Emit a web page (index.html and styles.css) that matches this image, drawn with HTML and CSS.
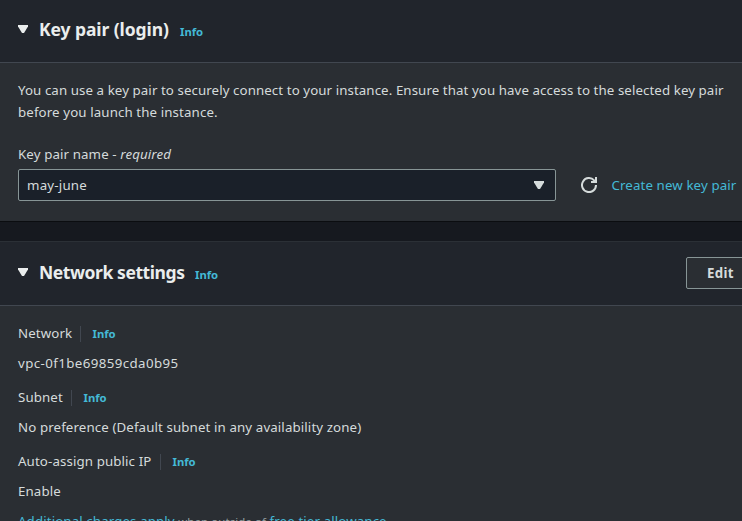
FILE: index.html
```
<!DOCTYPE html>
<html lang="en">
<head>
<meta charset="utf-8">
<title>Launch an instance</title>
<link rel="stylesheet" href="styles.css">
</head>
<body>
<section class="panel key-pair">
  <header class="panel-header">
    <svg class="caret" width="10" height="8" viewBox="0 0 10 8"><path d="M0 0h10v1.5L6 8H4L0 1.5z"/></svg>
    <h2 class="title">Key pair (login)</h2>
    <a class="info">Info</a>
  </header>
  <div class="panel-body">
    <p class="description"><span class="line-one">You can use a key pair to securely connect to your instance. Ensure that you have access to the selected key pair</span><br>before you launch the instance.</p>
    <label class="field-label">Key pair name - <i>required</i></label>
    <div class="field-row">
      <div class="select">
        <span>may-june</span>
        <svg class="caret" width="10" height="8" viewBox="0 0 10 8"><path d="M0 0h10v1.5L6 8H4L0 1.5z"/></svg>
      </div>
      <svg class="refresh" width="16" height="16" viewBox="0 0 16 16"><path d="M15 8A7 7 0 1 1 13.2 3.4L14.6 5M15 0v5H10"/></svg>
      <a class="create">Create new key pair</a>
    </div>
  </div>
</section>
<section class="panel network">
  <header class="panel-header">
    <svg class="caret" width="10" height="8" viewBox="0 0 10 8"><path d="M0 0h10v1.5L6 8H4L0 1.5z"/></svg>
    <h2 class="title title-network">Network settings</h2>
    <a class="info">Info</a>
    <button class="edit">Edit</button>
  </header>
  <div class="settings">
    <div class="setting">
      <div class="name"><span class="name-network">Network</span><a class="info">Info</a></div>
      <div class="value vpc">vpc-0f1be69859cda0b95</div>
    </div>
    <div class="setting">
      <div class="name"><span class="name-subnet">Subnet</span><a class="info">Info</a></div>
      <div class="value">No preference (Default subnet in any availability zone)</div>
    </div>
    <div class="setting">
      <div class="name"><span class="name-ip">Auto-assign public IP</span><a class="info">Info</a></div>
      <div class="value">Enable</div>
      <div class="value charges"><a>Additional charges apply</a> <small>when outside of</small> <a>free tier allowance</a></div>
    </div>
  </div>
</section>
</body>
</html>
```
FILE: styles.css
```
* { box-sizing: border-box; }
body {
  margin: 0;
  height: 521px;
  overflow: hidden;
  background: #16191f;
  color: #d5dbdb;
  font: 13.3px/22px "Noto Sans", "Open Sans", sans-serif;
  letter-spacing: 0.11px;
  white-space: nowrap;
}
a { color: #44b9d6; }
svg { flex: none; }
.panel { background: #2a2e33; }
.key-pair { height: 222px; border-bottom: 1px solid #0b0d10; }
.network { height: 280px; overflow: hidden; margin-top: 19px; border-top: 1px solid #2b3036; }
.panel-header {
  display: flex;
  align-items: baseline;
  height: 63px;
  padding: 17px 0 0 18px;
  background: #21252c;
  border-bottom: 1px solid #414750;
}
.network .panel-header { height: 64px; }
.caret { fill: #eaeded; }
.panel-header .caret { align-self: flex-start; margin-top: 8px; }
.network .panel-header .caret { margin-top: 9px; }
.title {
  width: 130px;
  margin: 0 0 0 11px;
  color: #eaeded;
  font-size: 17.5px;
  font-weight: 700;
  line-height: 24px;
  letter-spacing: -0.08px;
}
.title-network { width: 145px; letter-spacing: -0.42px; }
.network .title { padding-top: 1px; }
.info { font-size: 11.3px; font-weight: 700; letter-spacing: 0; }
.panel-header .info { margin-left: 11px; }
.edit {
  align-self: flex-start;
  flex: none;
  width: 80px;
  height: 32px;
  margin: -2px -24px 0 auto;
  padding: 0 0 0 20px;
  background: #2a2e33;
  border: 1px solid #879596;
  border-radius: 2px;
  color: #d5dbdb;
  font: 700 13.3px/30px "Noto Sans", sans-serif;
  letter-spacing: 0.3px;
  text-align: left;
}
.panel-body { padding: 16px 0 0 18px; }
.description { margin: 0 0 20px; }
.line-one { letter-spacing: 0.08px; }
.field-label { display: block; }
.field-row { display: flex; align-items: center; margin-top: 4px; }
.select {
  display: flex;
  align-items: center;
  justify-content: space-between;
  width: 538px;
  height: 32px;
  padding: 0 11px 0 8px;
  background: #1a2029;
  border: 1px solid #879596;
  border-radius: 2px;
  letter-spacing: 0.2px;
}
.select .caret { fill: #d5dbdb; }
.refresh { margin-left: 25px; fill: none; stroke: #d5dbdb; stroke-width: 2; }
.create { margin-left: 14.5px; }
.settings { padding: 16px 0 0 18px; }
.setting { margin-bottom: 12px; }
.name { display: flex; align-items: center; height: 22px; }
.name span { position: relative; padding-right: 8px; }
.name span::after {
  content: "";
  position: absolute;
  top: 4px;
  right: 0;
  width: 1px;
  height: 16px;
  background: #414750;
}
.name .info { margin-left: 11.5px; padding-top: 1px; }
.name-network { width: 63px; }
.name-subnet { width: 54px; }
.name-ip { width: 143px; }
.value { margin-top: 8px; }
.vpc { letter-spacing: 0.4px; }
.charges small { color: #95a0a2; font-size: 11.4px; }
```
